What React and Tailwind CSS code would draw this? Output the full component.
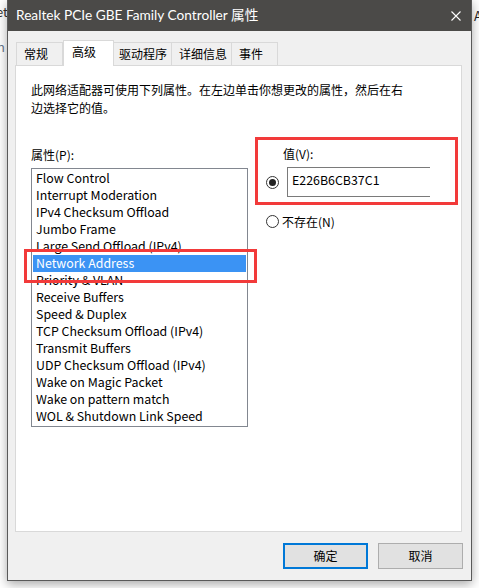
import React from 'react';

const items = [
  'Flow Control',
  'Interrupt Moderation',
  'IPv4 Checksum Offload',
  'Jumbo Frame',
  'Large Send Offload (IPv4)',
  'Network Address',
  'Priority & VLAN',
  'Receive Buffers',
  'Speed & Duplex',
  'TCP Checksum Offload (IPv4)',
  'Transmit Buffers',
  'UDP Checksum Offload (IPv4)',
  'Wake on Magic Packet',
  'Wake on pattern match',
  'WOL & Shutdown Link Speed',
];

const tabs = [
  { label: '常规', cls: 'w-[47px] pl-[7px]' },
  { label: '高级', cls: 'w-[51px] pl-[8px]' },
  { label: '驱动程序', cls: 'w-[58px] pl-[5px]' },
  { label: '详细信息', cls: 'w-[60px] pl-[7px]' },
  { label: '事件', cls: 'w-[46px] pl-[7px]' },
];

const Radio = ({ checked }) => (
  <span className="w-[13px] h-[13px] rounded-full border border-[#333] bg-white flex items-center justify-center shrink-0">
    {checked && <span className="w-[7px] h-[7px] rounded-full bg-[#222]" />}
  </span>
);

export default function App() {
  return (
    <div className="relative w-[479px] h-[588px] bg-white overflow-hidden text-[12px] text-black [font-family:'Noto_Sans_CJK_SC','Noto_Sans',sans-serif]">
      {/* desktop fragments behind the dialog */}
      <span className="absolute left-[-4px] top-[2px] text-[13px] text-[#333]">et</span>
      <span className="absolute left-[-3px] top-[37px] text-[13px] text-[#6a7a90]">h</span>
      <span className="absolute left-[474px] top-[6px] text-[13px] text-[#222]">A</span>

      <div className="relative ml-[7px] w-[465px] h-[581px] flex flex-col bg-[#f0f0f0] border-x border-b border-[#5a5a5a] shadow-[0_3px_10px_rgba(0,0,0,0.35)]">
        {/* title bar */}
        <div className="h-[31px] bg-[#4b4a48] flex items-center justify-between pl-[8px] pr-[10px] shrink-0">
          <span className="text-white text-[13.7px] [font-family:Lato,'Noto_Sans_CJK_SC',sans-serif]">
            Realtek PCIe GBE Family Controller 属性
          </span>
          <svg width="10" height="10" viewBox="0 0 10 10">
            <path d="M0.5 0.5 L9.5 9.5 M9.5 0.5 L0.5 9.5" stroke="#fff" strokeWidth="1.1" />
          </svg>
        </div>

        {/* tabs */}
        <div className="pt-[9px] pl-[8px] flex items-end h-[34px] shrink-0">
          {tabs.map((t, i) =>
            i === 1 ? (
              <div key={t.label} className={`relative z-10 h-[26px] -mb-px -mt-[2px] bg-white border border-b-0 border-[#d9d9d9] pt-[2px] leading-[18px] ${t.cls}`}>
                {t.label}
              </div>
            ) : (
              <div
                key={t.label}
                className={`h-[23px] border border-b-0 border-[#d9d9d9] bg-[#f0f0f0] pt-[1px] leading-[20px] ${i === 0 ? '' : 'border-l-0'} ${t.cls}`}
              >
                {t.label}
              </div>
            )
          )}
        </div>

        {/* panel */}
        <div className="ml-[7px] w-[447px] h-[467px] bg-white border border-[#d9d9d9] pt-[15px] pl-[15px] shrink-0 relative">
          <p className="leading-[18px] whitespace-nowrap">
            此网络适配器可使用下列属性。在左边单击你想更改的属性，然后在右
            <br />
            边选择它的值。
          </p>

          <div className="flex">
            <div className="pt-[29px] w-[217px] shrink-0">
              <div className="leading-[18px]">属性(P):</div>
              <div className="mt-[4px] h-[259px] border border-[#828790] bg-white pt-[1px] px-[1px]">
                {items.map((it) => (
                  <div
                    key={it}
                    className={`h-[17px] leading-[17px] pl-[3px] whitespace-nowrap text-[12.4px] ${it === 'Network Address' ? 'bg-[#3b93f4] text-white' : ''}`}
                  >
                    {it}
                  </div>
                ))}
              </div>
            </div>

            <div className="ml-[7px] pt-[20px]">
              <div className="w-[203px] h-[68px] border-[3px] border-[#f23a3a] pt-[5px]">
                <div className="pl-[25px] leading-[18px]">值(V):</div>
                <div className="flex items-center mt-[4px] pl-[8px] gap-[8px]">
                  <Radio checked />
                  <div className="w-[143px] h-[30px] border-y border-l border-[#7a7a7a] pl-[4px] pt-[2px] text-[12.4px] leading-[20px]">
                    E226B6CB37C1
                  </div>
                </div>
              </div>
              <div className="flex items-center mt-[8px] pl-[11px] gap-[3px] leading-[17px]">
                <Radio />
                <span>不存在(N)</span>
              </div>
            </div>
          </div>

          {/* annotation box around the selected item */}
          <div className="absolute left-[8px] top-[183px] w-[233px] h-[34px] border-[3px] border-[#f23a3a]" />
        </div>

        {/* buttons */}
        <div className="flex justify-end gap-[10px] pr-[8px] mt-[11px]">
          <button className="w-[85px] h-[26px] bg-[#e1e1e1] border-2 border-[#0078d7]">确定</button>
          <button className="w-[85px] h-[26px] bg-[#e1e1e1] border border-[#adadad]">取消</button>
        </div>
      </div>
    </div>
  );
}
